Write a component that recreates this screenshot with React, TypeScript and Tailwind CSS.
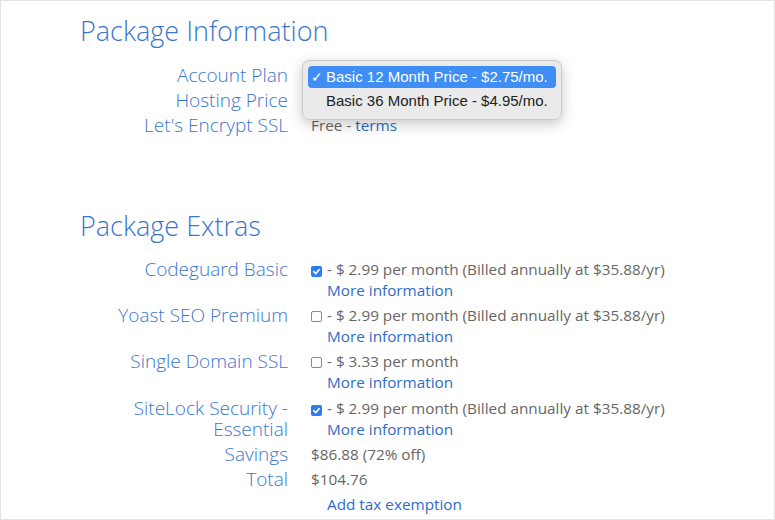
import React from 'react';

const label = 'text-right text-[19px] leading-[21px] font-light text-[#3a76cf]';
const value = 'text-[15.3px] leading-[21px] text-[#666666]';
const link = 'text-[15.3px] leading-[21px] text-[#2f6cc7]';

function Box({ checked }: { checked: boolean }) {
  if (checked) {
    return (
      <span className="inline-flex items-center justify-center w-[11px] h-[11px] rounded-[2px] bg-[#2f7bf0] mr-[5px] align-[-1px]">
        <svg width="9" height="9" viewBox="0 0 10 10">
          <path d="M2 5.2 L4.2 7.4 L8 2.8" fill="none" stroke="#fff" strokeWidth="1.8" strokeLinecap="round" strokeLinejoin="round" />
        </svg>
      </span>
    );
  }
  return <span className="inline-block w-[11px] h-[11px] rounded-[2px] border border-[#8a8a8a] bg-white mr-[5px] align-[-1px]" />;
}

interface Extra {
  name: string[];
  checked: boolean;
  price: string;
  extra?: string;
}

const extras: Extra[] = [
  { name: ['Codeguard Basic'], checked: true, price: '- $ 2.99 per month (Billed annually at $35.88/yr)' },
  { name: ['Yoast SEO Premium'], checked: false, price: '- $ 2.99 per month (Billed annually at $35.88/yr)' },
  { name: ['Single Domain SSL'], checked: false, price: '- $ 3.33 per month', extra: 'pb-[3px]' },
  { name: ['SiteLock Security -', 'Essential'], checked: true, price: '- $ 2.99 per month (Billed annually at $35.88/yr)' },
];

export default function App() {
  return (
    <div className="w-[775px] h-[520px] bg-white border border-[#e4e4e4] overflow-hidden" style={{ fontFamily: '"Open Sans", sans-serif' }}>
      <div className="pl-[79px]">
        <h2 className="mt-[12px] text-[27px] leading-[36px] font-light text-[#3a76cf]">Package Information</h2>

        <div className="mt-[14px] grid grid-cols-[208px_1fr] gap-x-[23px]">
          <div className={`${label} py-[2px]`}>Account Plan</div>
          <div className="relative py-[2px]">
            <div className={value}>&nbsp;</div>
            {/* open select menu */}
            <div className="absolute left-[-9px] top-[-3px] w-[260px] rounded-[7px] border border-[#c9c9c9] bg-[#e9e9e9]/95 shadow-[0_4px_14px_rgba(0,0,0,0.22)] px-[5px] py-[5px] z-10" style={{ fontFamily: '"Liberation Sans", Arial, sans-serif' }}>
              <div className="flex items-center h-[22px] rounded-[4px] bg-[#3f8ef5] text-white text-[15px]">
                <span className="w-[18px] pl-[3px] text-[14px]">✓</span>
                <span>Basic 12 Month Price - $2.75/mo.</span>
              </div>
              <div className="flex items-center h-[26px] text-[#222] text-[15px]">
                <span className="w-[18px]" />
                <span>Basic 36 Month Price - $4.95/mo.</span>
              </div>
            </div>
          </div>
          <div className={`${label} py-[2px]`}>Hosting Price</div>
          <div className={`${value} py-[2px]`}>&nbsp;</div>
          <div className={`${label} py-[2px]`}>Let's Encrypt SSL</div>
          <div className={`${value} py-[2px]`}>
            Free - <span className="text-[#2f6cc7]">terms</span>
          </div>
        </div>

        <h2 className="mt-[70px] text-[27px] leading-[36px] font-light text-[#3a76cf]">Package Extras</h2>

        <div className="mt-[13px] grid grid-cols-[208px_1fr] gap-x-[23px]">
          {extras.map((e) => (
            <React.Fragment key={e.name[0]}>
              <div className={`${label} pt-[2px]`}>
                {e.name.map((n) => (
                  <div key={n}>{n}</div>
                ))}
              </div>
              <div className={`pt-[2px] ${e.extra ?? 'pb-[2px]'}`}>
                <div className={value}>
                  <Box checked={e.checked} />
                  {e.price}
                </div>
                <div className={`${link} pl-[16px]`}>More information</div>
              </div>
            </React.Fragment>
          ))}
          <div className={`${label} py-[2px]`}>Savings</div>
          <div className={`${value} py-[2px]`}>$86.88 (72% off)</div>
          <div className={`${label} py-[2px]`}>Total</div>
          <div className={`${value} py-[2px]`}>$104.76</div>
          <div className="py-[2px]" />
          <div className={`${link} py-[2px] pl-[16px]`}>Add tax exemption</div>
        </div>
      </div>
    </div>
  );
}
